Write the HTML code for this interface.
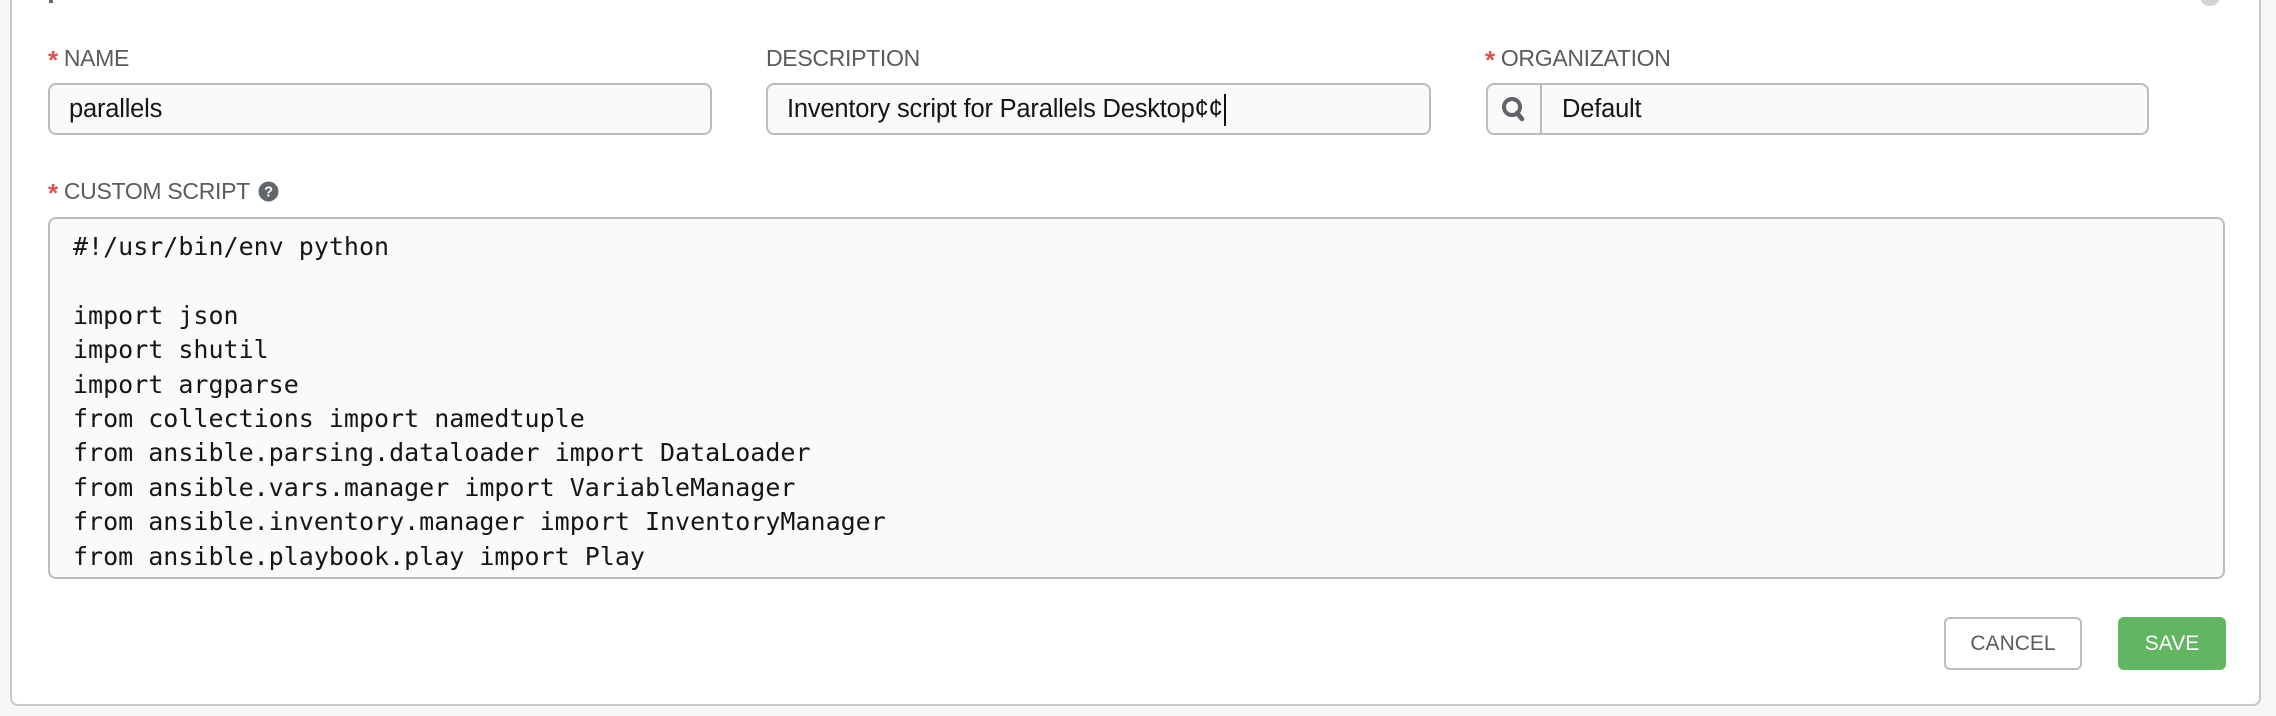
<!DOCTYPE html>
<html><head><meta charset="utf-8"><style>
body{margin:0;width:2276px;height:716px;background:#f6f6f6;position:relative;overflow:hidden;font-family:"Liberation Sans",sans-serif;}
.panel{position:absolute;left:10px;top:-10px;width:2251px;height:716px;background:#fff;border:2px solid #c8c8c8;border-radius:8px;box-sizing:border-box;}
.lbl{position:absolute;font-size:23px;color:#5b5b5b;letter-spacing:-0.3px;line-height:30px;height:30px;white-space:nowrap;}
.lbl b{color:#d9534f;font-weight:bold;font-size:26px;position:relative;top:3px;margin-right:6px;}
.inp{position:absolute;height:52px;top:83px;background:#fafafa;border:2px solid #bcbcbc;border-radius:8px;box-sizing:border-box;font-size:25.5px;color:#161616;line-height:48px;padding-left:19px;white-space:nowrap;letter-spacing:-0.2px;}
.ta{position:absolute;left:48px;top:217px;width:2177px;height:362px;background:#fafafa;border:2px solid #bcbcbc;border-radius:8px;box-sizing:border-box;overflow:hidden;}
pre{margin:0;position:absolute;left:23px;top:11px;font-family:"DejaVu Sans Mono","Liberation Mono",monospace;font-size:25px;line-height:34.4px;color:#161616;}
.btn{position:absolute;top:617px;height:53px;border-radius:6px;box-sizing:border-box;font-size:21px;display:flex;align-items:center;justify-content:center;}
</style></head><body>
<div class="panel"></div>
<div style="position:absolute;left:49px;top:0;width:4px;height:3px;background:#666"></div>
<div style="position:absolute;left:2200px;top:-12px;width:20px;height:18px;border-radius:50%;background:#d5d5d5"></div>

<div class="lbl" style="left:48px;top:42px"><b>*</b>NAME</div>
<div class="lbl" style="left:766px;top:42px"><b style="visibility:hidden;margin-right:0;width:0;display:inline-block">*</b>DESCRIPTION</div>
<div class="lbl" style="left:1485px;top:42px"><b>*</b>ORGANIZATION</div>

<div class="inp" style="left:48px;width:664px">parallels</div>
<div class="inp" style="left:766px;width:665px">Inventory script for Parallels Desktop¢¢<span style="display:inline-block;width:2px;height:32px;background:#111;vertical-align:middle;margin-left:1px"></span></div>
<div class="inp" style="left:1486px;width:663px;padding-left:0">
 <div style="position:absolute;left:0;top:0;width:52px;height:48px;border-right:2px solid #bcbcbc">
  <svg width="52" height="48" viewBox="0 0 52 48"><circle cx="24" cy="22" r="8" fill="none" stroke="#5f6368" stroke-width="4"/><line x1="29" y1="28" x2="34" y2="34" stroke="#5f6368" stroke-width="4.5" stroke-linecap="round"/></svg>
 </div>
 <span style="position:absolute;left:74px">Default</span>
</div>

<div class="lbl" style="left:48px;top:175px"><b>*</b>CUSTOM SCRIPT <svg width="21" height="21" viewBox="0 0 20 20" style="vertical-align:-3px;margin-left:2px"><circle cx="10" cy="10" r="9.5" fill="#62666b"/><text x="10" y="15" font-size="14" font-weight="bold" fill="#fff" text-anchor="middle" font-family="Liberation Sans">?</text></svg></div>

<div class="ta"><pre>#!/usr/bin/env python

import json
import shutil
import argparse
from collections import namedtuple
from ansible.parsing.dataloader import DataLoader
from ansible.vars.manager import VariableManager
from ansible.inventory.manager import InventoryManager
from ansible.playbook.play import Play
from ansible.executor.task_queue_manager import TaskQueueManager</pre></div>

<div class="btn" style="left:1944px;width:138px;border:2px solid #bcbcbc;color:#5b5b5b;background:#fff">CANCEL</div>
<div class="btn" style="left:2118px;width:108px;background:#62b662;color:#fff">SAVE</div>
</body></html>
